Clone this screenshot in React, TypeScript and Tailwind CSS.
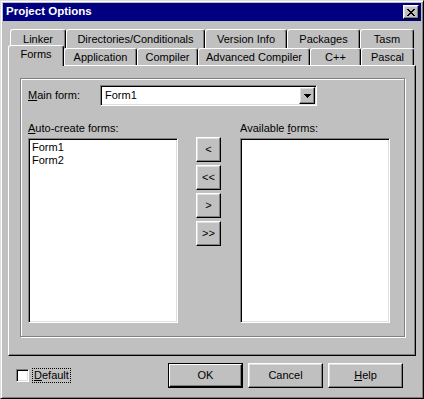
import React from "react";

const raised =
  "bg-[#c0c0c0] border border-t-white border-l-white border-r-black border-b-black shadow-[inset_-1px_-1px_0_#808080,inset_1px_1px_0_#dfdfdf]";
const sunken =
  "bg-white border border-t-[#808080] border-l-[#808080] border-r-white border-b-white shadow-[inset_1px_1px_0_#000,inset_-1px_-1px_0_#dfdfdf]";

function Tab({ label, w, selected }: { label: string; w: string; selected?: boolean }) {
  return (
    <div
      className={`${w} ${
        selected ? "h-[21px] -mt-[3px] relative z-10 pb-[3px]" : "h-full"
      } bg-[#c0c0c0] border-t border-l border-r border-t-white border-l-white border-r-black shadow-[inset_-1px_0_0_#808080] rounded-tl-[3px] rounded-tr-[3px] flex items-center justify-center leading-none whitespace-nowrap`}
    >
      {label}
    </div>
  );
}

function SmallBtn({ label }: { label: string }) {
  return (
    <div className={`${raised} w-[25px] h-[25px] flex items-center justify-center leading-none`}>
      {label}
    </div>
  );
}

export default function App() {
  return (
    <div className="w-[424px] h-[399px] bg-[#c0c0c0] border border-t-[#dfdfdf] border-l-[#dfdfdf] border-r-black border-b-black shadow-[inset_1px_1px_0_#fff,inset_-1px_-1px_0_#808080] p-[2px] flex flex-col font-['Liberation_Sans',Arial,sans-serif] text-[11px] text-black select-none">
      {/* Title bar */}
      <div className="h-[18px] bg-[#000080] flex items-center pl-[3px] pr-[2px]">
        <span className="text-white font-bold text-[11.5px] leading-none">Project Options</span>
        <div className={`${raised} ml-auto w-[16px] h-[14px] flex items-center justify-center`}>
          <svg width="8" height="7" viewBox="0 0 8 7" shapeRendering="crispEdges">
            <path d="M0 0h2v1H0zM6 0h2v1H6zM1 1h2v1H1zM5 1h2v1H5zM2 2h4v1H2zM3 3h2v1H3zM2 4h4v1H2zM1 5h2v1H1zM5 5h2v1H5zM0 6h2v1H0zM6 6h2v1H6z" fill="#000" />
          </svg>
        </div>
      </div>

      {/* Tabs row 1 */}
      <div className="mt-[8px] h-[19px] pl-[7px] flex">
        <Tab label="Linker" w="w-[56px]" />
        <Tab label="Directories/Conditionals" w="w-[139px]" />
        <Tab label="Version Info" w="w-[82px]" />
        <Tab label="Packages" w="w-[73px]" />
        <Tab label="Tasm" w="w-[54px]" />
      </div>
      {/* Tabs row 2 */}
      <div className="h-[17px] pl-[5px] flex items-start">
        <Tab label="Forms" w="w-[56px]" selected />
        <Tab label="Application" w="w-[73px]" />
        <Tab label="Compiler" w="w-[61px]" />
        <Tab label="Advanced Compiler" w="w-[112px]" />
        <Tab label="C++" w="w-[51px]" />
        <Tab label="Pascal" w="w-[53px]" />
      </div>

      {/* Panel */}
      <div className="ml-[5px] w-[408px] h-[291px] border border-t-white border-l-white border-r-black border-b-black shadow-[inset_-1px_-1px_0_#808080] pl-[11px] pt-[12px]">
        <div className="w-[385px] h-[259px] border border-[#808080] shadow-[1px_1px_0_#fff,inset_1px_1px_0_#fff] pl-[7px] pt-[6px]">
          {/* Main form */}
          <div className="flex items-center h-[21px]">
            <div className="w-[72px]">
              <span className="underline">M</span>ain form:
            </div>
            <div className={`${sunken} w-[217px] h-[21px] p-[1px] flex items-center`}>
              <span className="pl-[3px] leading-none">Form1</span>
              <div className={`${raised} ml-auto w-[16px] h-[17px] flex items-center justify-center`}>
                <svg width="7" height="4" viewBox="0 0 7 4" shapeRendering="crispEdges">
                  <path d="M0 0h7v1H0zM1 1h5v1H1zM2 2h3v1H2zM3 3h1v1H3z" fill="#000" />
                </svg>
              </div>
            </div>
          </div>

          {/* Lists */}
          <div className="mt-[16px] flex">
            <div className="w-[150px] flex flex-col">
              <div className="h-[13px] leading-[13px] mb-[3px]">
                <span className="underline">A</span>uto-create forms:
              </div>
              <div className={`${sunken} h-[185px] py-[2px] pl-[3px] leading-[13px]`}>
                <div>Form1</div>
                <div>Form2</div>
              </div>
            </div>
            <div className="ml-[18px] pt-[15px] flex flex-col gap-[3px]">
              <SmallBtn label="<" />
              <SmallBtn label="<<" />
              <SmallBtn label=">" />
              <SmallBtn label=">>" />
            </div>
            <div className="ml-[19px] w-[150px] flex flex-col">
              <div className="h-[13px] leading-[13px] mb-[3px]">
                Available <span className="underline">f</span>orms:
              </div>
              <div className={`${sunken} h-[185px]`} />
            </div>
          </div>
        </div>
      </div>

      {/* Bottom row */}
      <div className="mt-[7px] h-[25px] flex items-center">
        <div className={`${sunken} ml-[13px] w-[13px] h-[13px]`} />
        <div className="ml-[3px] border border-dotted border-black px-[1px] leading-[13px]">
          <span className="underline">D</span>efault
        </div>
        <div className="ml-auto mr-[18px] flex gap-[5px]">
          <div className="w-[75px] h-[25px] border border-black">
            <div className="w-full h-full border border-t-white border-l-white border-r-black border-b-black shadow-[inset_-1px_-1px_0_#808080] flex items-center justify-center">
              OK
            </div>
          </div>
          <div className={`${raised} w-[75px] h-[25px] flex items-center justify-center`}>Cancel</div>
          <div className={`${raised} w-[75px] h-[25px] flex items-center justify-center`}>
            <span className="underline">H</span>elp
          </div>
        </div>
      </div>
    </div>
  );
}
